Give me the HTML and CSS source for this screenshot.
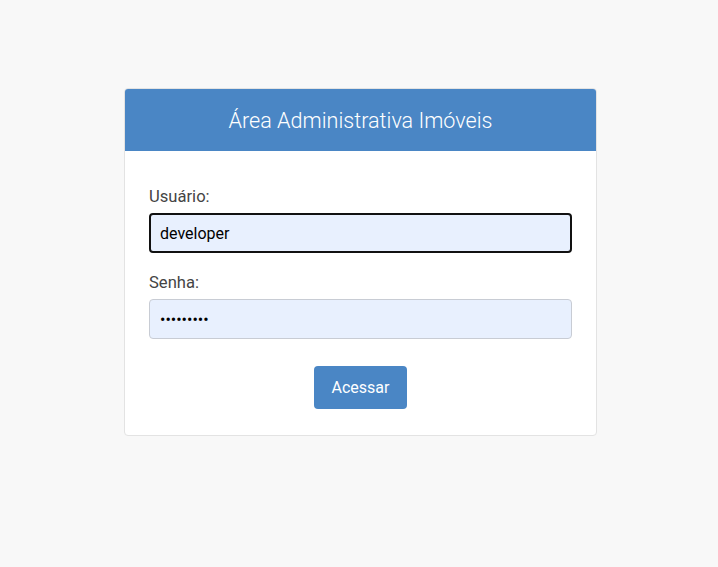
FILE: index.html
```html
<!DOCTYPE html>
<html lang="pt-BR">
<head>
<meta charset="utf-8">
<title>Área Administrativa Imóveis</title>
<link rel="stylesheet" href="styles.css">
</head>
<body>
<div class="card">
  <div class="card-header">Área Administrativa Imóveis</div>
  <form class="card-body">
    <div class="group">
      <label class="label" for="user">Usuário:</label>
      <input class="input input-focus" id="user" type="text" value="developer">
    </div>
    <div class="group">
      <label class="label" for="pass">Senha:</label>
      <input class="input" id="pass" type="password" value="developer">
    </div>
    <div class="actions">
      <button class="btn" type="button">Acessar</button>
    </div>
  </form>
</div>
</body>
</html>
```
FILE: styles.css
```css
* { box-sizing: border-box; }
html, body { margin: 0; padding: 0; }
body {
  background: #f8f8f8;
  font-family: Roboto, "Liberation Sans", sans-serif;
  color: #444;
  height: 567px;
}
.card {
  width: 473px;
  margin: 88px 0 0 124px;
  background: #fff;
  border: 1px solid #e3e3e3;
  border-radius: 4px;
  overflow: hidden;
}
.card-header {
  background: #4a86c5;
  color: #fff;
  height: 63px;
  margin: -1px -1px 0;
  display: flex;
  align-items: center;
  justify-content: center;
  font-size: 21.6px;
  font-weight: 300;
  padding-top: 1px;
}
.card-body {
  padding: 34px 24px 26px;
  margin: 0;
}
.group { margin-bottom: 18px; }
.group + .group { margin-bottom: 27px; }
.label {
  display: block;
  font-size: 16.6px;
  line-height: 24px;
  color: #444;
  margin-bottom: 4px;
}
.input {
  display: block;
  width: 100%;
  height: 40px;
  border: 1px solid #c8ccd4;
  border-radius: 4px;
  background: #e8f0fe;
  font-family: Roboto, "Liberation Sans", sans-serif;
  font-size: 16px;
  color: #000;
  padding: 0 10px;
  outline: none;
}
.input-focus {
  border: 2px solid #111;
  padding: 0 9px;
}
.actions { display: flex; justify-content: center; }
.btn {
  width: 93px;
  height: 43px;
  background: #4a86c5;
  color: #fff;
  border: none;
  border-radius: 4px;
  font-family: Roboto, "Liberation Sans", sans-serif;
  font-size: 16px;
  cursor: pointer;
}
```
